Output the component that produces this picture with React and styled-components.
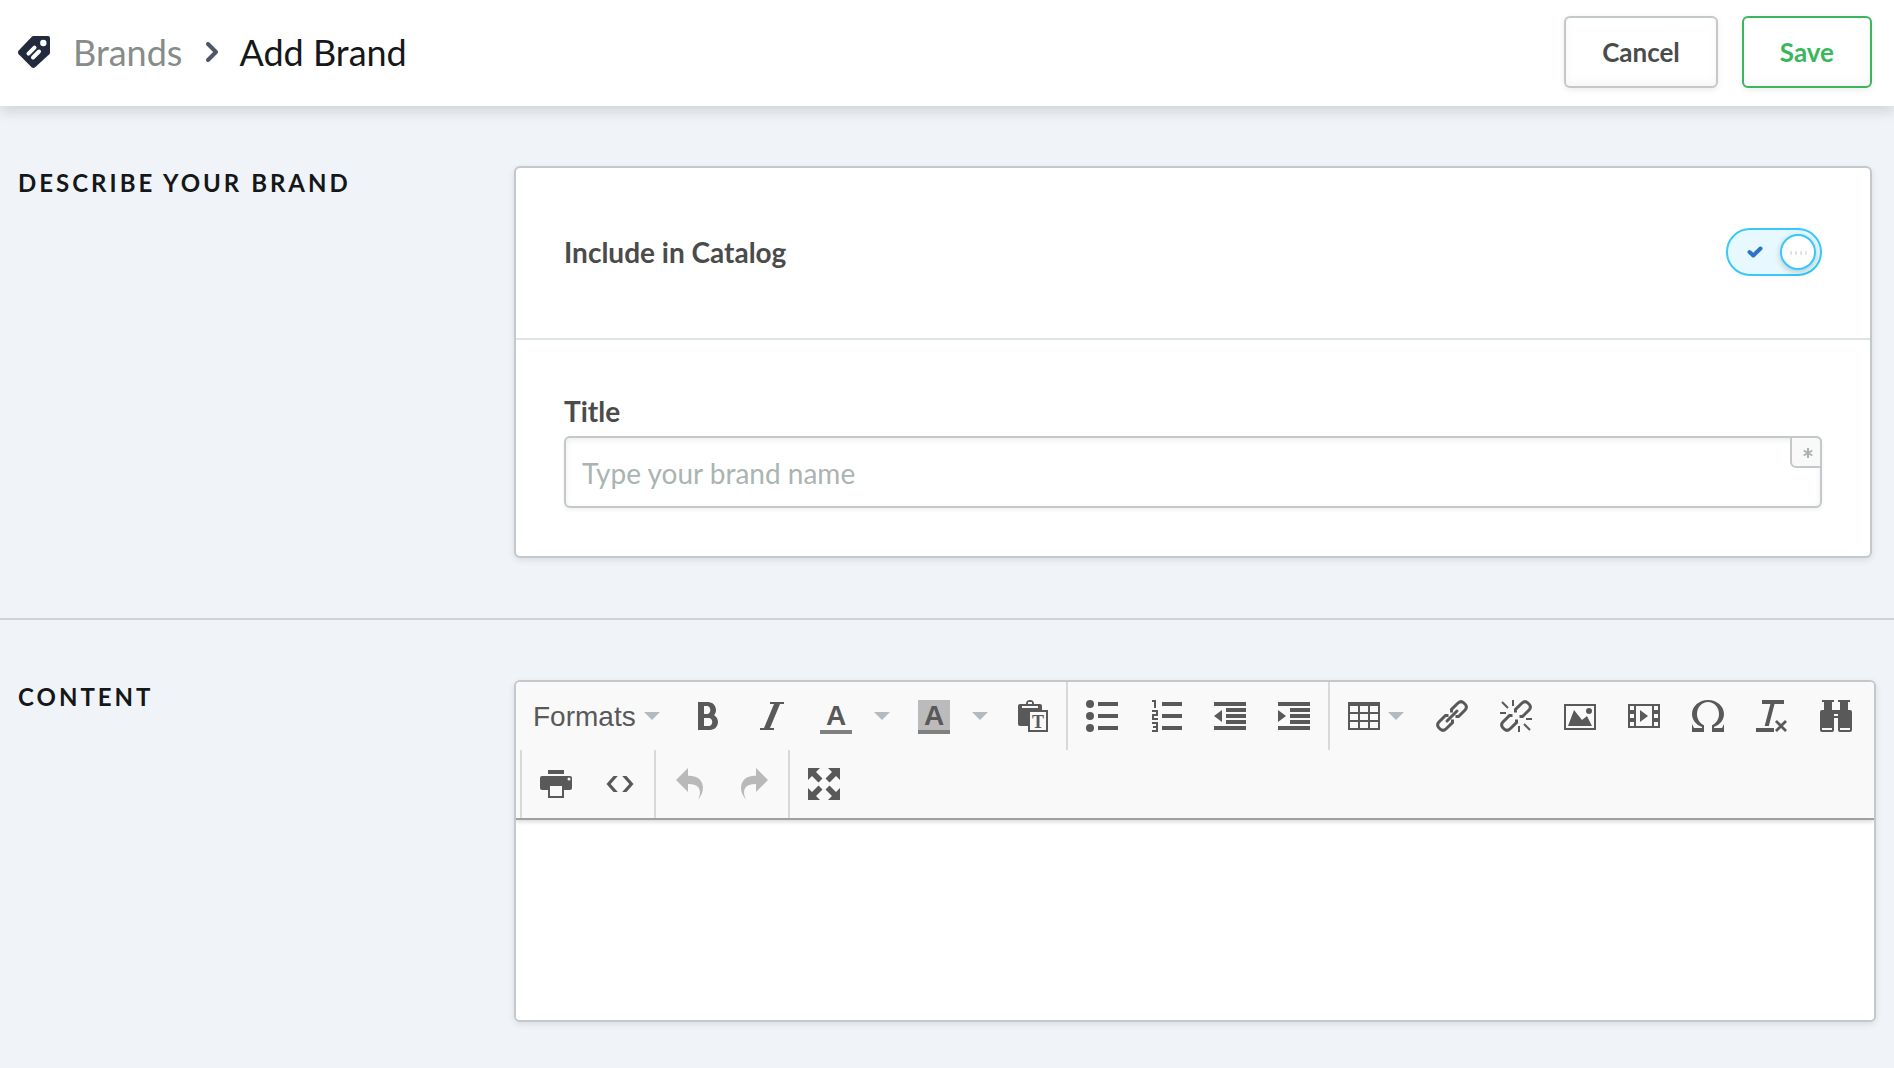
import { useState } from 'react';
import styled, { createGlobalStyle, css } from 'styled-components';
import { ImBold, ImItalic, ImOmega, ImClearFormatting, ImUndo2, ImRedo2 } from 'react-icons/im';

const GlobalStyle = createGlobalStyle`
    *, *::before, *::after {
        box-sizing: border-box;
    }

    body {
        margin: 0;
        background: #f0f4f8;
        font-family: Lato, sans-serif;
        color: #4a4c4c;
    }

    button, input, select, textarea {
        font: inherit;
        color: inherit;
        margin: 0;
    }
`;

const Header = styled.header`
    display: flex;
    align-items: center;
    justify-content: space-between;
    height: 106px;
    padding: 0 22px 2px 18px;
    background: #fff;
    box-shadow: 0 6px 12px rgba(0, 0, 0, 0.13);
`;

const Breadcrumb = styled.nav`
    display: flex;
    align-items: center;
    font-size: 36px;
    line-height: 44px;

    svg {
        flex: none;
    }
`;

const Crumb = styled.a`
    margin: 0 24px 0 23px;
    color: #858c89;
    text-decoration: none;
`;

const PageTitle = styled.h1`
    margin: 0 0 0 21px;
    font-size: 36px;
    font-weight: 400;
    color: #151718;
`;

const Actions = styled.div`
    display: flex;
    gap: 24px;
`;

const Button = styled.button`
    height: 72px;
    padding: 0 36px;
    border: 2px solid ${({ $primary }) => ($primary ? '#3cb65d' : '#c3c8cb')};
    border-radius: 6px;
    background: #fff;
    color: ${({ $primary }) => ($primary ? '#3cb65d' : '#4a4c4c')};
    font-size: 26px;
    font-weight: 700;
    box-shadow: 0 2px 6px rgba(0, 0, 0, 0.08), inset 0 -4px 8px rgba(0, 20, 10, 0.04);
    cursor: pointer;
`;

const Section = styled.section`
    display: grid;
    grid-template-columns: 496px minmax(0, 1fr);
    padding: 60px ${({ $wide }) => ($wide ? '18px' : '22px')} 60px 18px;

    & + & {
        border-top: 2px solid #cdd2d4;
        padding-bottom: 46px;
    }
`;

const SectionTitle = styled.h2`
    margin: 0;
    font-size: 24px;
    font-weight: 700;
    line-height: 34px;
    letter-spacing: 3px;
    text-transform: uppercase;
    color: #151718;
`;

const panel = css`
    border: 2px solid #c3c8cb;
    border-radius: 6px;
    background: #fff;
    box-shadow: 0 2px 6px rgba(0, 0, 0, 0.1);
`;

const Card = styled.div`
    ${panel}
`;

const ToggleRow = styled.div`
    display: flex;
    align-items: center;
    justify-content: space-between;
    height: 172px;
    padding: 0 48px 2px;
    border-bottom: 2px solid #dde4e3;
`;

const FieldRow = styled.div`
    padding: 48px;
`;

const Label = styled.label`
    display: block;
    font-size: 28px;
    font-weight: 700;
    line-height: 46px;
`;

const Switch = styled.label`
    position: relative;
    display: flex;
    align-items: center;
    justify-content: space-between;
    width: 96px;
    height: 48px;
    padding: 0 4px 0 19px;
    border: 2px solid #37c9fa;
    border-radius: 24px;
    background: #e7f8fe;
    cursor: pointer;
`;

const SwitchInput = styled.input`
    position: absolute;
    inset: 0;
    width: 100%;
    height: 100%;
    opacity: 0;
    cursor: pointer;
`;

const Knob = styled.span`
    display: flex;
    align-items: center;
    justify-content: center;
    gap: 3px;
    width: 36px;
    height: 36px;
    border: 2px solid #37c9fa;
    border-radius: 50%;
    background: #fff;
    box-shadow: 0 2px 6px rgba(0, 0, 0, 0.2);

    i {
        width: 2px;
        height: 4px;
        margin-top: 2px;
        border-radius: 1px;
        background: #dde3e1;
    }
`;

const InputWrap = styled.div`
    position: relative;
    margin-top: 2px;
`;

const TextInput = styled.input`
    display: block;
    width: 100%;
    height: 72px;
    padding: 2px 48px 0 16px;
    border: 2px solid #c3c8cb;
    border-radius: 6px;
    background: #fff;
    font-size: 28px;
    box-shadow: 0 2px 4px rgba(0, 0, 0, 0.06), inset 0 2px 6px rgba(0, 0, 0, 0.08);

    &::placeholder {
        color: #aab4b1;
        opacity: 1;
    }
`;

const Required = styled.span`
    position: absolute;
    top: 0;
    right: 0;
    display: flex;
    align-items: center;
    justify-content: center;
    width: 32px;
    height: 32px;
    padding: 2px 0 0 4px;
    border: 2px solid #c3c8cb;
    border-radius: 0 6px 0 6px;
    background: #f9f9f9;
`;

const EditorBox = styled.div`
    ${panel}
    overflow: hidden;
`;

const Toolbar = styled.div`
    display: flex;
    flex-wrap: wrap;
    position: relative;
    padding: 0 4px;
    border-bottom: 2px solid #a0a0a0;
    background: #f9f9f9;
    box-shadow: 0 2px 4px rgba(0, 0, 0, 0.15);
`;

const Group = styled.div`
    display: flex;
    height: 68px;
    padding: 0 2px;

    & + & {
        border-left: 2px solid #d9d9d9;
    }
`;

const ToolButton = styled.button`
    display: flex;
    align-items: center;
    gap: 8px;
    height: 68px;
    padding: 0 16px;
    border: 0;
    background: none;
    color: #595959;
    cursor: pointer;

    > svg {
        flex: none;
    }

    &:disabled {
        color: #b9b9b9;
        cursor: default;
    }
`;

const CaretButton = styled(ToolButton)`
    padding: 0 12px 0 6px;
`;

const FormatsWrap = styled.div`
    position: relative;
    width: 154px;

    svg {
        position: absolute;
        right: 16px;
        top: 30px;
        pointer-events: none;
    }
`;

const FormatsSelect = styled.select`
    appearance: none;
    width: 100%;
    height: 68px;
    padding: 0 36px 0 11px;
    border: 0;
    background: none;
    color: #595959;
    font-family: "Liberation Sans", Arial, sans-serif;
    font-size: 28px;
    cursor: pointer;
`;

const ColorLetter = styled.span`
    width: 32px;
    height: 34px;
    margin-top: 2px;
    border-bottom: 4px solid #808080;
    background: ${({ $filled }) => ($filled ? '#bbb' : 'none')};
    font-family: "Liberation Sans", Arial, sans-serif;
    font-size: 28px;
    font-weight: 700;
    line-height: 32px;
    text-align: center;
`;

const EditorBody = styled.textarea`
    display: block;
    width: 100%;
    height: 200px;
    padding: 16px;
    border: 0;
    outline: 0;
    resize: none;
    background: #fff;
    font-size: 28px;
`;

function Icon({ children }) {
    return (
        <svg width="32" height="32" viewBox="0 0 32 32" fill="currentColor" aria-hidden="true">
            {children}
        </svg>
    );
}

function Caret() {
    return (
        <svg width="16" height="8" viewBox="0 0 16 8" aria-hidden="true">
            <path d="M0 0h16L8 8z" fill="#b3bbc1" />
        </svg>
    );
}

function Tool({ label, children, ...rest }) {
    return (
        <ToolButton type="button" aria-label={label} title={label} {...rest}>
            {children}
        </ToolButton>
    );
}

const chain = (
    <g fill="none" stroke="currentColor" strokeWidth="3">
        <path d="M15.5 12.500V9.500L22.300 2.800Q25 .5 27.700 2.800L29.300 4.400Q31.500 7 29.300 9.700L22.500 16.500H19.500" />
        <path d="M16.500 19.500V22.500L9.700 29.200Q7 31.500 4.300 29.200L2.700 27.600Q.5 25 2.700 22.300L9.500 15.500H12.500" />
    </g>
);

const arrow = 'M0 0h12L8 4l6.500 6.500-4 4L4 8l-4 4z';

export default function App() {
    const [inCatalog, setInCatalog] = useState(true);

    return (
        <>
            <GlobalStyle />
            <Header>
                <Breadcrumb aria-label="Breadcrumb">
                    <svg width="32" height="32" viewBox="0 0 32 32" aria-hidden="true">
                        <path d="M15.500 0H30q2 0 2 2v14.500q0 1-.7 1.700L17.200 31.300q-1.900 1.400-3.600 0L.7 18.200q-1.400-1.700 0-3.600L13.800.7q.7-.7 1.700-.7z" fill="#232a3d" />
                        <circle cx="25.300" cy="7" r="3.200" fill="#fff" />
                        <path d="M10.500 17.700l6-6M15 21.500l6-6" stroke="#fff" strokeWidth="4" strokeLinecap="round" />
                        <path d="M11.500 20.500l8-8" stroke="#232a3d" strokeWidth="1" />
                    </svg>
                    <Crumb href="#brands">Brands</Crumb>
                    <svg width="12" height="20" viewBox="0 0 12 20" fill="none" aria-hidden="true">
                        <path d="M2 2l8 8-8 8" stroke="#4e566a" strokeWidth="4" strokeLinecap="round" strokeLinejoin="round" />
                    </svg>
                    <PageTitle>Add Brand</PageTitle>
                </Breadcrumb>
                <Actions>
                    <Button type="button">Cancel</Button>
                    <Button type="button" $primary>Save</Button>
                </Actions>
            </Header>

            <main>
                <Section>
                    <SectionTitle>Describe your brand</SectionTitle>
                    <Card>
                        <ToggleRow>
                            <Label htmlFor="inCatalog">Include in Catalog</Label>
                            <Switch>
                                <SwitchInput
                                    type="checkbox"
                                    id="inCatalog"
                                    checked={inCatalog}
                                    onChange={(e) => setInCatalog(e.target.checked)}
                                />
                                <svg width="16" height="12" viewBox="0 0 16 12" fill="none" aria-hidden="true">
                                    <path d="M2.500 6l3.800 3.500L13.500 2.500" stroke="#2e74c4" strokeWidth="4" strokeLinecap="round" strokeLinejoin="round" />
                                </svg>
                                <Knob><i /><i /><i /><i /></Knob>
                            </Switch>
                        </ToggleRow>
                        <FieldRow>
                            <Label htmlFor="title">Title</Label>
                            <InputWrap>
                                <TextInput type="text" id="title" placeholder="Type your brand name" required />
                                <Required>
                                    <svg width="10" height="10" viewBox="0 0 10 10" aria-hidden="true">
                                        <path d="M5 0v10M.7 2.500l8.600 5M.7 7.500l8.600-5" stroke="#a9b2b0" strokeWidth="2" />
                                    </svg>
                                </Required>
                            </InputWrap>
                        </FieldRow>
                    </Card>
                </Section>

                <Section $wide>
                    <SectionTitle>Content</SectionTitle>
                    <EditorBox>
                        <Toolbar role="toolbar" aria-label="Formatting">
                            <Group>
                                <FormatsWrap>
                                    <FormatsSelect aria-label="Formats">
                                        <option>Formats</option>
                                    </FormatsSelect>
                                    <Caret />
                                </FormatsWrap>
                                <Tool label="Bold"><ImBold size={32} /></Tool>
                                <Tool label="Italic"><ImItalic size={32} /></Tool>
                                <Tool label="Text color"><ColorLetter>A</ColorLetter></Tool>
                                <CaretButton type="button" aria-label="Choose text color"><Caret /></CaretButton>
                                <Tool label="Background color"><ColorLetter $filled>A</ColorLetter></Tool>
                                <CaretButton type="button" aria-label="Choose background color"><Caret /></CaretButton>
                                <Tool label="Paste as text">
                                    <Icon>
                                        <path d="M4 4h6q0-4 4-4t4 4h6q2 0 2 2v20H4q-2 0-2-2V6q0-2 2-2z" />
                                        <path d="M12 2h4v2h-4zM6 6h16v2H6z" fill="#f9f9f9" />
                                        <path d="M13 11h18v20H13z" fill="#f9f9f9" stroke="currentColor" strokeWidth="2" />
                                        <text x="22" y="28" textAnchor="middle" fontFamily="Liberation Serif, serif" fontWeight="700" fontSize="18">T</text>
                                    </Icon>
                                </Tool>
                            </Group>
                            <Group>
                                <Tool label="Bullet list">
                                    <Icon>
                                        <circle cx="4" cy="4" r="4" />
                                        <circle cx="4" cy="16" r="4" />
                                        <circle cx="4" cy="28" r="4" />
                                        <path d="M12 2h20v4H12zM12 14h20v4H12zM12 26h20v4H12z" />
                                    </Icon>
                                </Tool>
                                <Tool label="Numbered list">
                                    <Icon>
                                        <path d="M12 2h20v4H12zM12 14h20v4H12zM12 26h20v4H12z" />
                                        <path d="M2 1h3v7M2 11h5v4H3v4h5M2 23h5v8H2M3 27h4" fill="none" stroke="currentColor" strokeWidth="2" />
                                    </Icon>
                                </Tool>
                                <Tool label="Decrease indent">
                                    <Icon>
                                        <path d="M0 2h32v4H0zM12 8h20v4H12zM12 14h20v4H12zM12 20h20v4H12zM0 26h32v4H0zM8 10v12l-8-6z" />
                                    </Icon>
                                </Tool>
                                <Tool label="Increase indent">
                                    <Icon>
                                        <path d="M0 2h32v4H0zM12 8h20v4H12zM12 14h20v4H12zM12 20h20v4H12zM0 26h32v4H0zM0 10v12l8-6z" />
                                    </Icon>
                                </Tool>
                            </Group>
                            <Group>
                                <Tool label="Table">
                                    <Icon>
                                        <path
                                            fillRule="evenodd"
                                            d="M0 2h32v28H0zM2 6v6h8V6zM12 6v6h8V6zM22 6v6h8V6zM2 14v6h8v-6zM12 14v6h8v-6zM22 14v6h8v-6zM2 22v6h8v-6zM12 22v6h8v-6zM22 22v6h8v-6z"
                                        />
                                    </Icon>
                                    <Caret />
                                </Tool>
                                <Tool label="Insert link">
                                    <Icon>
                                        {chain}
                                        <path d="M11 21L21 11" stroke="currentColor" strokeWidth="3" strokeLinecap="round" />
                                    </Icon>
                                </Tool>
                                <Tool label="Remove link">
                                    <Icon>
                                        {chain}
                                        <path d="M2 2l6 6M13 0v6M0 13h6M26 19h6M19 26v6M24 24l6 6" stroke="currentColor" strokeWidth="2" />
                                    </Icon>
                                </Tool>
                                <Tool label="Insert image">
                                    <Icon>
                                        <path d="M1 5h30v24H1z" fill="none" stroke="currentColor" strokeWidth="2" />
                                        <path d="M4 26l6-16 8 10 5-4 5 10z" />
                                        <circle cx="25" cy="11" r="3" />
                                    </Icon>
                                </Tool>
                                <Tool label="Insert video">
                                    <Icon>
                                        <path
                                            fillRule="evenodd"
                                            d="M0 4h32v24H0zM2 6v4h4V6zM2 14v4h4v-4zM2 22v4h4v-4zM8 6v20h16V6zM26 6v4h4V6zM26 14v4h4v-4zM26 22v4h4v-4z"
                                        />
                                        <path d="M12 10v12l8-6z" />
                                    </Icon>
                                </Tool>
                                <Tool label="Special character"><ImOmega size={32} /></Tool>
                                <Tool label="Clear formatting"><ImClearFormatting size={32} /></Tool>
                                <Tool label="Find and replace">
                                    <Icon>
                                        <path d="M2 0h12v2h-2v8H4V2H2zM18 0h12v2h-2v8h-8V2h-2z" />
                                        <path fillRule="evenodd" d="M2 10h28q2 0 2 2v18q0 2-2 2H20q-2 0-2-2V18h-4v12q0 2-2 2H2q-2 0-2-2V12q0-2 2-2zM14 14v2h4v-2zM2 28v2h10v-2zM20 28v2h10v-2z" />
                                    </Icon>
                                </Tool>
                            </Group>
                            <Group>
                                <Tool label="Print">
                                    <Icon>
                                        <path d="M8 2h16v4H8zM2 8h28q2 0 2 2v10q0 2-2 2h-6v8H8v-8H2q-2 0-2-2V10q0-2 2-2z" />
                                        <path d="M10 18h12v10H10z" fill="#f9f9f9" />
                                        <circle cx="29" cy="11" r="1.500" fill="#f9f9f9" />
                                    </Icon>
                                </Tool>
                                <Tool label="Source code">
                                    <Icon>
                                        <path d="M9.500 8h4.300L6.700 16l7.100 8H9.500L2.500 16zM22.500 8h-4.300l7.100 8-7.100 8h4.300l7-8z" />
                                    </Icon>
                                </Tool>
                            </Group>
                            <Group>
                                <Tool label="Undo" disabled><ImUndo2 size={32} /></Tool>
                                <Tool label="Redo" disabled><ImRedo2 size={32} /></Tool>
                            </Group>
                            <Group>
                                <Tool label="Fullscreen">
                                    <Icon>
                                        <path d={arrow} />
                                        <path d={arrow} transform="matrix(-1 0 0 1 32 0)" />
                                        <path d={arrow} transform="matrix(1 0 0 -1 0 32)" />
                                        <path d={arrow} transform="matrix(-1 0 0 -1 32 32)" />
                                    </Icon>
                                </Tool>
                            </Group>
                        </Toolbar>
                        <EditorBody aria-label="Content" />
                    </EditorBox>
                </Section>
            </main>
        </>
    );
}
